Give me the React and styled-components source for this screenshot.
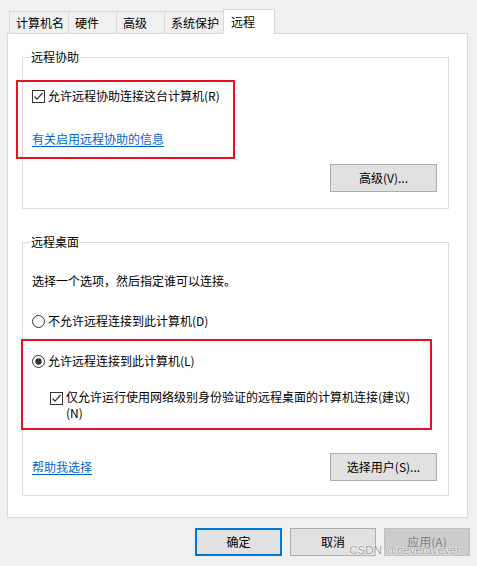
import React from "react";
import styled, { createGlobalStyle } from "styled-components";

const Global = createGlobalStyle`
  html, body { margin: 0; padding: 0; background: #f0f0f0; }
  body {
    font-family: "Noto Sans CJK SC", "Noto Sans", sans-serif;
    font-size: 12px;
    line-height: 16px;
    color: #000;
  }
  * { box-sizing: border-box; }
`;

const Window = styled.div`
  position: relative;
  width: 477px;
  height: 566px;
  padding: 9px 0 0 7px;
  background: #f0f0f0;
`;

const TabRow = styled.div`
  display: flex;
  align-items: flex-end;
  height: 24px;
  margin-left: 2px;
`;

const Tab = styled.div`
  position: relative;
  width: ${(p) => p.$w}px;
  height: ${(p) => (p.$active ? 25 : 22)}px;
  margin-left: ${(p) => (p.$first ? 0 : -1)}px;
  margin-bottom: ${(p) => (p.$active ? -1 : 0)}px;
  padding-left: ${(p) => (p.$active ? 7 : 6)}px;
  display: flex;
  align-items: center;
  border: 1px solid #d9d9d9;
  border-bottom: none;
  background: ${(p) => (p.$active ? "#ffffff" : "#f0f0f0")};
  z-index: ${(p) => (p.$active ? 1 : 0)};
  white-space: nowrap;
`;

const Panel = styled.div`
  width: 461px;
  height: 485px;
  border: 1px solid #d9d9d9;
  background: #fff;
  padding: 15px 0 0 14px;
  display: flex;
  flex-direction: column;
`;

const Group = styled.fieldset`
  width: 427px;
  min-width: 0;
  margin: ${(p) => p.$mt || 0}px 0 0 0;
  padding: 0;
  border: 1px solid #dcdcdc;
`;

const Legend = styled.legend`
  margin-left: 7px;
  padding: 0 1px;
  line-height: 16px;
`;

const RedBox = styled.div`
  width: ${(p) => p.$w}px;
  margin: ${(p) => p.$mt}px 0 0 ${(p) => p.$ml}px;
  border: 2px solid #e81123;
  padding: ${(p) => p.$pad};
`;

const Row = styled.div`
  display: flex;
  align-items: ${(p) => (p.$top ? "flex-start" : "center")};
  gap: 3px;
  margin-top: ${(p) => p.$mt || 0}px;
  padding-left: ${(p) => p.$indent || 0}px;
  white-space: nowrap;
`;

const Text = styled.div`
  margin-top: ${(p) => p.$mt || 0}px;
  padding-left: ${(p) => p.$pl || 0}px;
`;

const Link = styled.a`
  display: inline-block;
  color: #0066cc;
  text-decoration: underline;
  text-underline-offset: 2px;
  margin-top: ${(p) => p.$mt || 0}px;
  cursor: pointer;
`;

const ButtonRow = styled.div`
  display: flex;
  justify-content: ${(p) => p.$justify || "flex-end"};
  align-items: center;
  margin-top: ${(p) => p.$mt}px;
  padding: 0 11px ${(p) => p.$pb}px ${(p) => p.$pl || 0}px;
`;

const Button = styled.button`
  width: ${(p) => p.$w || 107}px;
  height: 28px;
  padding: 0;
  font: inherit;
  color: ${(p) => (p.$disabled ? "#838383" : "#000")};
  background: ${(p) => (p.$disabled ? "#cccccc" : "#e1e1e1")};
  border: ${(p) =>
    p.$default ? "2px solid #0078d7" : p.$disabled ? "1px solid #bfbfbf" : "1px solid #adadad"};
`;

const Footer = styled.div`
  display: flex;
  justify-content: flex-end;
  gap: 8px;
  margin-top: 10px;
  padding-right: 7px;
`;

const Watermark = styled.div`
  position: absolute;
  right: 17px;
  bottom: 9px;
  font-family: "Liberation Sans", Arial, sans-serif;
  font-size: 11.5px;
  line-height: 14px;
  color: #9c9c9c;
  text-shadow: 0 0 1px #fff, 0 0 1px #fff, 0 0 2px #fff;
  pointer-events: none;
`;

const Box = styled.svg`
  flex: none;
  width: 13px;
  height: 13px;
  margin-top: ${(p) => p.$mt || 0}px;
`;

const Checkbox = ({ mt }) => (
  <Box $mt={mt} viewBox="0 0 13 13">
    <rect x="0.5" y="0.5" width="12" height="12" fill="#fff" stroke="#333" />
    <path d="M2.5 6.5 L5 9.2 L10.5 3" fill="none" stroke="#333" strokeWidth="1.2" />
  </Box>
);

const Radio = ({ checked }) => (
  <Box viewBox="0 0 13 13">
    <circle cx="6.5" cy="6.5" r="6" fill="#fff" stroke="#333" />
    {checked && <circle cx="6.5" cy="6.5" r="3.2" fill="#333" />}
  </Box>
);

const tabs = [
  { label: "计算机名", w: 60 },
  { label: "硬件", w: 49 },
  { label: "高级", w: 49 },
  { label: "系统保护", w: 60 },
  { label: "远程", w: 52, active: true },
];

export default function App() {
  return (
    <>
      <Global />
      <Window>
        <TabRow>
          {tabs.map((t, i) => (
            <Tab key={t.label} $w={t.w} $active={t.active} $first={i === 0}>
              {t.label}
            </Tab>
          ))}
        </TabRow>
        <Panel>
          <Group>
            <Legend>远程协助</Legend>
            <RedBox $w={219} $mt={15} $ml={-7} $pad="6px 0 10px 14px">
              <Row>
                <Checkbox />
                <span>允许远程协助连接这台计算机(R)</span>
              </Row>
              <Link $mt={27}>有关启用远程协助的信息</Link>
            </RedBox>
            <ButtonRow $mt={5} $pb={16}>
              <Button>高级(V)...</Button>
            </ButtonRow>
          </Group>

          <Group $mt={25}>
            <Legend>远程桌面</Legend>
            <Text $mt={23} $pl={9}>选择一个选项，然后指定谁可以连接。</Text>
            <Row $mt={24} $indent={9}>
              <Radio />
              <span>不允许远程连接到此计算机(D)</span>
            </Row>
            <RedBox $w={411} $mt={10} $ml={-2} $pad="12px 0 7px 9px">
              <Row>
                <Radio checked />
                <span>允许远程连接到此计算机(L)</span>
              </Row>
              <Row $mt={20} $indent={18} $top>
                <Checkbox mt={3} />
                <span>
                  仅允许运行使用网络级别身份验证的远程桌面的计算机连接(建议)
                  <br />
                  (N)
                </span>
              </Row>
            </RedBox>
            <ButtonRow $mt={23} $pb={14} $pl={9} $justify="space-between">
              <Link>帮助我选择</Link>
              <Button>选择用户(S)...</Button>
            </ButtonRow>
          </Group>
        </Panel>
        <Footer>
          <Button $w={87} $default>确定</Button>
          <Button $w={86}>取消</Button>
          <Button $w={86} $disabled>应用(A)</Button>
        </Footer>
        <Watermark>CSDN @neverayever</Watermark>
      </Window>
    </>
  );
}
